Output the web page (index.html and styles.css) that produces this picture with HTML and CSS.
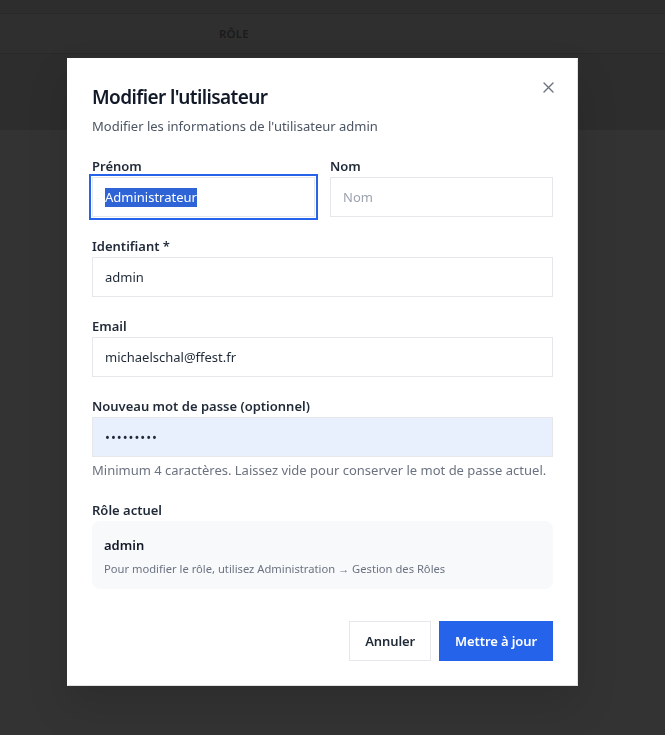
FILE: index.html
```html
<!DOCTYPE html>
<html lang="fr">
<head>
<meta charset="utf-8">
<title>Modifier l'utilisateur</title>
<link rel="stylesheet" href="styles.css">
</head>
<body>
<div class="page">
  <div class="top-card">
    <div class="thead"><span class="th-role">RÔLE</span></div>
  </div>
</div>

<div class="backdrop">
  <div class="modal" role="dialog">
    <button class="close" aria-label="Fermer">
      <svg width="11" height="11" viewBox="0 0 11 11"><path d="M1 1L10 10M10 1L1 10" stroke="#6b7280" stroke-width="1.4" fill="none" stroke-linecap="round"/></svg>
    </button>
    <h2 class="title">Modifier l'utilisateur</h2>
    <p class="subtitle">Modifier les informations de l'utilisateur admin</p>

    <div class="form">
      <div class="row">
        <div class="field">
          <label class="label">Prénom</label>
          <div class="input focused"><span class="sel">Administrateur</span></div>
        </div>
        <div class="field">
          <label class="label">Nom</label>
          <div class="input placeholder">Nom</div>
        </div>
      </div>
      <div class="field">
        <label class="label">Identifiant *</label>
        <div class="input">admin</div>
      </div>
      <div class="field">
        <label class="label">Email</label>
        <div class="input">michaelschal@ffest.fr</div>
      </div>
      <div class="field">
        <label class="label">Nouveau mot de passe (optionnel)</label>
        <div class="input autofill"><span class="dots">•••••••••</span></div>
        <p class="help">Minimum 4 caractères. Laissez vide pour conserver le mot de passe actuel.</p>
      </div>
      <div class="field role-field">
        <label class="label">Rôle actuel</label>
        <div class="role-box">
          <div class="role-name">admin</div>
          <div class="role-note">Pour modifier le rôle, utilisez Administration → Gestion des Rôles</div>
        </div>
      </div>
    </div>

    <div class="footer">
      <button class="btn btn-secondary">Annuler</button>
      <button class="btn btn-primary">Mettre à jour</button>
    </div>
  </div>
</div>
</body>
</html>
```
FILE: styles.css
```css
* { box-sizing: border-box; }
html, body { margin: 0; padding: 0; }
body {
  width: 665px;
  height: 735px;
  overflow: hidden;
  background: #333333;
  font-family: "Noto Sans", "Open Sans", sans-serif;
}

.page { width: 100%; }
.top-card {
  height: 130px;
  background: #2d2d2d;
  padding-top: 13px;
}
.thead {
  height: 41px;
  border-top: 1px solid #292929;
  border-bottom: 1px solid #292929;
  background: #2f2f2f;
  padding-left: 219px;
  display: flex;
  align-items: center;
}
.th-role {
  font-size: 11.5px;
  font-weight: 600;
  color: #1b1b1b;
  letter-spacing: 0.2px;
}

.backdrop {
  position: fixed;
  inset: 0;
  padding: 58px 0 0 67px;
}

.modal {
  position: relative;
  width: 511px;
  background: #ffffff;
  border: 1px solid #ffffff;
  border-right-color: #e2e2e2;
  border-bottom-color: #e2e2e2;
  padding: 24px;
  box-shadow: 0 20px 40px rgba(0,0,0,0.12);
}

.close {
  position: absolute;
  top: 16px;
  right: 17px;
  width: 24px;
  height: 24px;
  padding: 0;
  border: 0;
  background: transparent;
  display: flex;
  align-items: center;
  justify-content: center;
}

.title {
  margin: 0;
  font-size: 19px;
  line-height: 28px;
  font-weight: 600;
  letter-spacing: -0.6px;
  color: #111827;
}
.subtitle {
  margin: 5px 0 0;
  font-size: 13px;
  line-height: 20px;
  color: #4b5563;
}

.form {
  margin-top: 20px;
  display: flex;
  flex-direction: column;
  gap: 19px;
}
.row {
  display: grid;
  grid-template-columns: 1fr 1fr;
  gap: 15px;
}
.field { display: flex; flex-direction: column; }
.label {
  font-size: 13px;
  line-height: 20px;
  font-weight: 600;
  color: #1f2937;
  margin-bottom: 1px;
}
.input {
  height: 40px;
  border: 1px solid #e5e7eb;
  padding: 0 12px;
  display: flex;
  align-items: center;
  font-size: 13px;
  color: #1f2937;
  background: #fff;
}
.input.focused {
  outline: 2px solid #2563eb;
  outline-offset: 1px;
}
.sel {
  background: #2f64d6;
  color: #ffffff;
  line-height: 19px;
}
.input.placeholder { color: #9ca3af; }
.input.autofill { background: #e8f0fe; }
.dots { font-size: 13px; letter-spacing: 1px; color: #1f2937; }
.help {
  margin: 3px 0 0;
  font-size: 13px;
  line-height: 20px;
  color: #6b7280;
}
.role-field { margin-top: 1px; }

.role-box {
  background: #f8f9fb;
  border-radius: 8px;
  padding: 14px 12px 0;
  height: 68px;
}
.role-name {
  font-size: 13px;
  line-height: 20px;
  font-weight: 600;
  color: #111827;
  margin-bottom: 5px;
}
.role-note {
  font-size: 11.2px;
  line-height: 18px;
  color: #6b7280;
}

.footer {
  margin-top: 32px;
  display: flex;
  justify-content: flex-end;
  gap: 8px;
}
.btn {
  height: 40px;
  padding: 0 15px;
  font-family: inherit;
  font-size: 13px;
  font-weight: 600;
  letter-spacing: -0.1px;
  border-radius: 0;
  cursor: pointer;
}
.btn-secondary {
  background: #fff;
  color: #1f2937;
  border: 1px solid #e5e7eb;
}
.btn-primary {
  background: #2563eb;
  color: #fff;
  border: 1px solid #2563eb;
}
```
